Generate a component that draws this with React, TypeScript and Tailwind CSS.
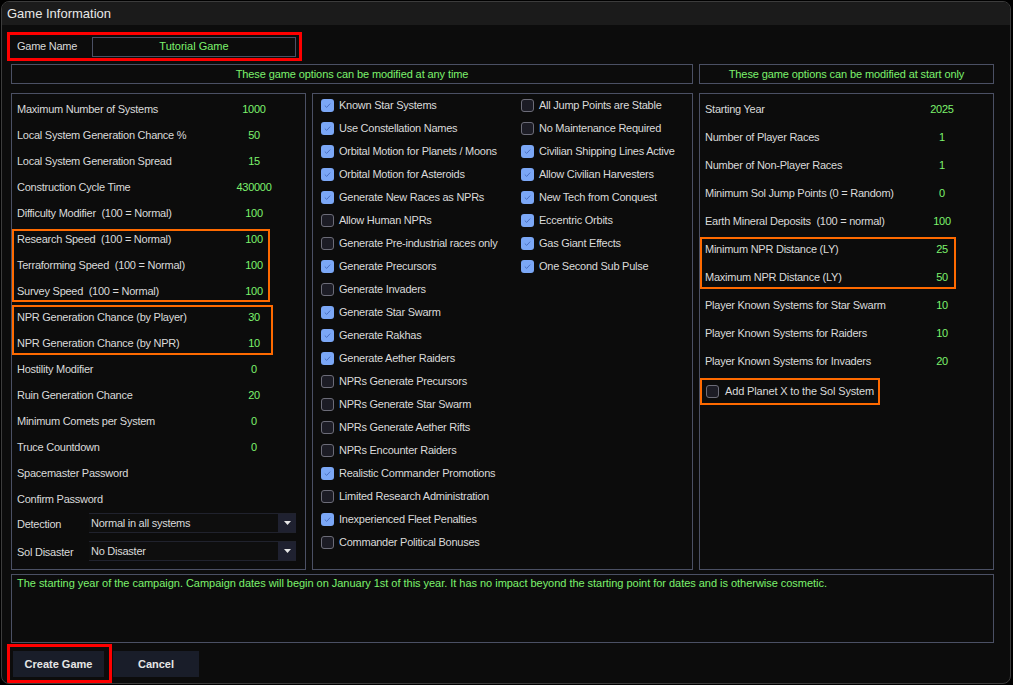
import { ReactNode } from "react"

type Row = [string, string]

const leftTop: Row[] = [
  ["Maximum Number of Systems", "1000"],
  ["Local System Generation Chance %", "50"],
  ["Local System Generation Spread", "15"],
  ["Construction Cycle Time", "430000"],
  ["Difficulty Modifier  (100 = Normal)", "100"],
]
const leftSpeed: Row[] = [
  ["Research Speed  (100 = Normal)", "100"],
  ["Terraforming Speed  (100 = Normal)", "100"],
  ["Survey Speed  (100 = Normal)", "100"],
]
const leftNpr: Row[] = [
  ["NPR Generation Chance (by Player)", "30"],
  ["NPR Generation Chance (by NPR)", "10"],
]
const leftRest: Row[] = [
  ["Hostility Modifier", "0"],
  ["Ruin Generation Chance", "20"],
  ["Minimum Comets per System", "0"],
  ["Truce Countdown", "0"],
  ["Spacemaster Password", ""],
  ["Confirm Password", ""],
]

const checksA: [string, boolean][] = [
  ["Known Star Systems", true],
  ["Use Constellation Names", true],
  ["Orbital Motion for Planets / Moons", true],
  ["Orbital Motion for Asteroids", true],
  ["Generate New Races as NPRs", true],
  ["Allow Human NPRs", false],
  ["Generate Pre-industrial races only", false],
  ["Generate Precursors", true],
  ["Generate Invaders", false],
  ["Generate Star Swarm", true],
  ["Generate Rakhas", true],
  ["Generate Aether Raiders", true],
  ["NPRs Generate Precursors", false],
  ["NPRs Generate Star Swarm", false],
  ["NPRs Generate Aether Rifts", false],
  ["NPRs Encounter Raiders", false],
  ["Realistic Commander Promotions", true],
  ["Limited Research Administration", false],
  ["Inexperienced Fleet Penalties", true],
  ["Commander Political Bonuses", false],
]
const checksB: [string, boolean][] = [
  ["All Jump Points are Stable", false],
  ["No Maintenance Required", false],
  ["Civilian Shipping Lines Active", true],
  ["Allow Civilian Harvesters", true],
  ["New Tech from Conquest", true],
  ["Eccentric Orbits", true],
  ["Gas Giant Effects", true],
  ["One Second Sub Pulse", true],
]

const rightTop: Row[] = [
  ["Starting Year", "2025"],
  ["Number of Player Races", "1"],
  ["Number of Non-Player Races", "1"],
  ["Minimum Sol Jump Points (0 = Random)", "0"],
  ["Earth Mineral Deposits  (100 = normal)", "100"],
]
const rightNpr: Row[] = [
  ["Minimum NPR Distance (LY)", "25"],
  ["Maximum NPR Distance (LY)", "50"],
]
const rightRest: Row[] = [
  ["Player Known Systems for Star Swarm", "10"],
  ["Player Known Systems for Raiders", "10"],
  ["Player Known Systems for Invaders", "20"],
]

function LeftRow({ row }: { row: Row }) {
  return (
    <div className="flex h-[26px] items-center pl-[5px]">
      <span className="w-[222px] shrink-0 whitespace-pre">{row[0]}</span>
      <span className="flex w-[30px] shrink-0 justify-center text-[#7cf26c]">{row[1]}</span>
    </div>
  )
}

function RightRow({ row }: { row: Row }) {
  return (
    <div className="flex h-[28px] items-center pl-[5px]">
      <span className="w-[222px] shrink-0 whitespace-pre">{row[0]}</span>
      <span className="flex w-[30px] shrink-0 justify-center text-[#7cf26c]">{row[1]}</span>
    </div>
  )
}

// orange highlight drawn over a group of rows
function Highlight({ children, box }: { children: ReactNode; box: string }) {
  return (
    <div className="relative">
      {children}
      <div className={`pointer-events-none absolute left-0 border-2 border-[#ff6a00] ${box}`}></div>
    </div>
  )
}

function Check({ on }: { on: boolean }) {
  if (on) {
    return (
      <span className="flex h-[13px] w-[13px] shrink-0 items-center justify-center rounded-[3px] bg-[#7ba7f6]">
        <svg width="9" height="9" viewBox="0 0 9 9">
          <path d="M1.8 4.6 L3.7 6.4 L7.2 2.6" fill="none" stroke="#4a70c2" strokeWidth="1" />
        </svg>
      </span>
    )
  }
  return <span className="h-[13px] w-[13px] shrink-0 rounded-[3px] border border-[#6c6c78] bg-[#1c1c25]"></span>
}

function CheckRow({ label, on }: { label: string; on: boolean }) {
  return (
    <div className="flex h-[23px] items-center gap-[5px]">
      <Check on={on} />
      <span className="whitespace-nowrap">{label}</span>
    </div>
  )
}

function Select({ value }: { value: string }) {
  return (
    <div className="flex h-[20px] w-[207px] border-y border-[#20222d] bg-[#0e0e0e]">
      <span className="flex-1 pl-[2px] leading-[18px]">{value}</span>
      <span className="flex w-[18px] items-center justify-center bg-[#1f2130]">
        <svg width="7" height="4" viewBox="0 0 7 4">
          <polygon points="0,0 7,0 3.5,4" fill="#e6e6e6" />
        </svg>
      </span>
    </div>
  )
}

export default function App() {
  return (
    <div className="h-[685px] w-[1013px] bg-black pl-[1px] pt-[1px] font-['Liberation_Sans',Arial,sans-serif] text-[11px] tracking-[-0.25px] text-[#dadada]">
      <div className="flex h-[683px] w-[1010px] flex-col overflow-hidden rounded-[8px] border border-[#3c3c3c] bg-[#0c0c0c]">
        {/* Title */}
        <div className="flex h-[23px] shrink-0 items-center bg-[#1b1b1b] pl-[5px] text-[13px] tracking-normal text-[#e8e8e8]">
          Game Information
        </div>

        {/* Game name */}
        <div className="ml-[5px] mt-[7px] flex h-[29px] w-[295px] items-center border-[3px] border-[#ff0000] pl-[7px]">
          <span className="w-[75px] shrink-0">Game Name</span>
          <div className="flex h-[20px] w-[204px] items-center justify-center border border-[#4b5064] pb-[1px] tracking-normal text-[#7cf26c]">
            Tutorial Game
          </div>
        </div>

        {/* Section headers */}
        <div className="ml-[9px] mt-[3px] flex gap-[6px] tracking-[-0.1px] text-[#7cf26c]">
          <div className="flex h-[20px] w-[682px] items-center justify-center border border-[#4b5064]">
            These game options can be modified at any time
          </div>
          <div className="flex h-[20px] w-[295px] items-center justify-center border border-[#4b5064]">
            These game options can be modified at start only
          </div>
        </div>

        {/* Panels */}
        <div className="ml-[9px] mt-[9px] flex h-[477px] gap-[6px]">
          {/* Left */}
          <div className="w-[295px] border border-[#4b5064] pt-[2px]">
            {leftTop.map((r) => (
              <LeftRow key={r[0]} row={r} />
            ))}
            <Highlight box="top-[3px] h-[73px] w-[258px]">
              {leftSpeed.map((r) => (
                <LeftRow key={r[0]} row={r} />
              ))}
            </Highlight>
            <Highlight box="top-[1px] h-[50px] w-[261px]">
              {leftNpr.map((r) => (
                <LeftRow key={r[0]} row={r} />
              ))}
            </Highlight>
            {leftRest.map((r) => (
              <LeftRow key={r[0]} row={r} />
            ))}
            <div className="flex h-[28px] items-start pl-[5px] pt-[1px]">
              <span className="flex h-[22px] w-[72px] items-center">Detection</span>
              <Select value="Normal in all systems" />
            </div>
            <div className="flex h-[28px] items-start pl-[5px] pt-[1px]">
              <span className="flex h-[23px] w-[72px] items-center">Sol Disaster</span>
              <Select value="No Disaster" />
            </div>
          </div>

          {/* Middle */}
          <div className="flex w-[381px] border border-[#4b5064] pl-[8px]">
            <div className="w-[200px] shrink-0">
              {checksA.map(([l, on]) => (
                <CheckRow key={l} label={l} on={on} />
              ))}
            </div>
            <div>
              {checksB.map(([l, on]) => (
                <CheckRow key={l} label={l} on={on} />
              ))}
            </div>
          </div>

          {/* Right */}
          <div className="w-[295px] border border-[#4b5064] pt-[1px]">
            {rightTop.map((r) => (
              <RightRow key={r[0]} row={r} />
            ))}
            <Highlight box="top-[2px] h-[52px] w-[256px]">
              {rightNpr.map((r) => (
                <RightRow key={r[0]} row={r} />
              ))}
            </Highlight>
            {rightRest.map((r) => (
              <RightRow key={r[0]} row={r} />
            ))}
            <div className="mt-[3px] flex h-[27px] w-[180px] items-center gap-[6px] border-2 border-[#ff6a00] pl-[4px] tracking-[-0.15px]">
              <Check on={false} />
              <span className="whitespace-nowrap">Add Planet X to the Sol System</span>
            </div>
          </div>
        </div>

        {/* Description */}
        <div className="ml-[9px] mt-[4px] h-[69px] w-[983px] border border-[#4b5064] pl-[5px] tracking-[-0.03px] text-[#7cf26c]">
          The starting year of the campaign. Campaign dates will begin on January 1st of this year. It has no impact beyond the starting point for dates and is otherwise cosmetic.
        </div>

        {/* Buttons */}
        <div className="ml-[5px] mt-[1px] flex items-start">
          <div className="h-[39px] w-[105px] border-[3px] border-[#ff0000] pl-[3px] pt-[4px]">
            <button className="h-[26px] w-[91px] bg-[#191d29] text-[11px] font-bold tracking-normal text-[#e6e6e6]">
              Create Game
            </button>
          </div>
          <button className="ml-[1px] mt-[7px] h-[26px] w-[86px] bg-[#191d29] text-[11px] font-bold tracking-normal text-[#e6e6e6]">
            Cancel
          </button>
        </div>
      </div>
    </div>
  )
}
